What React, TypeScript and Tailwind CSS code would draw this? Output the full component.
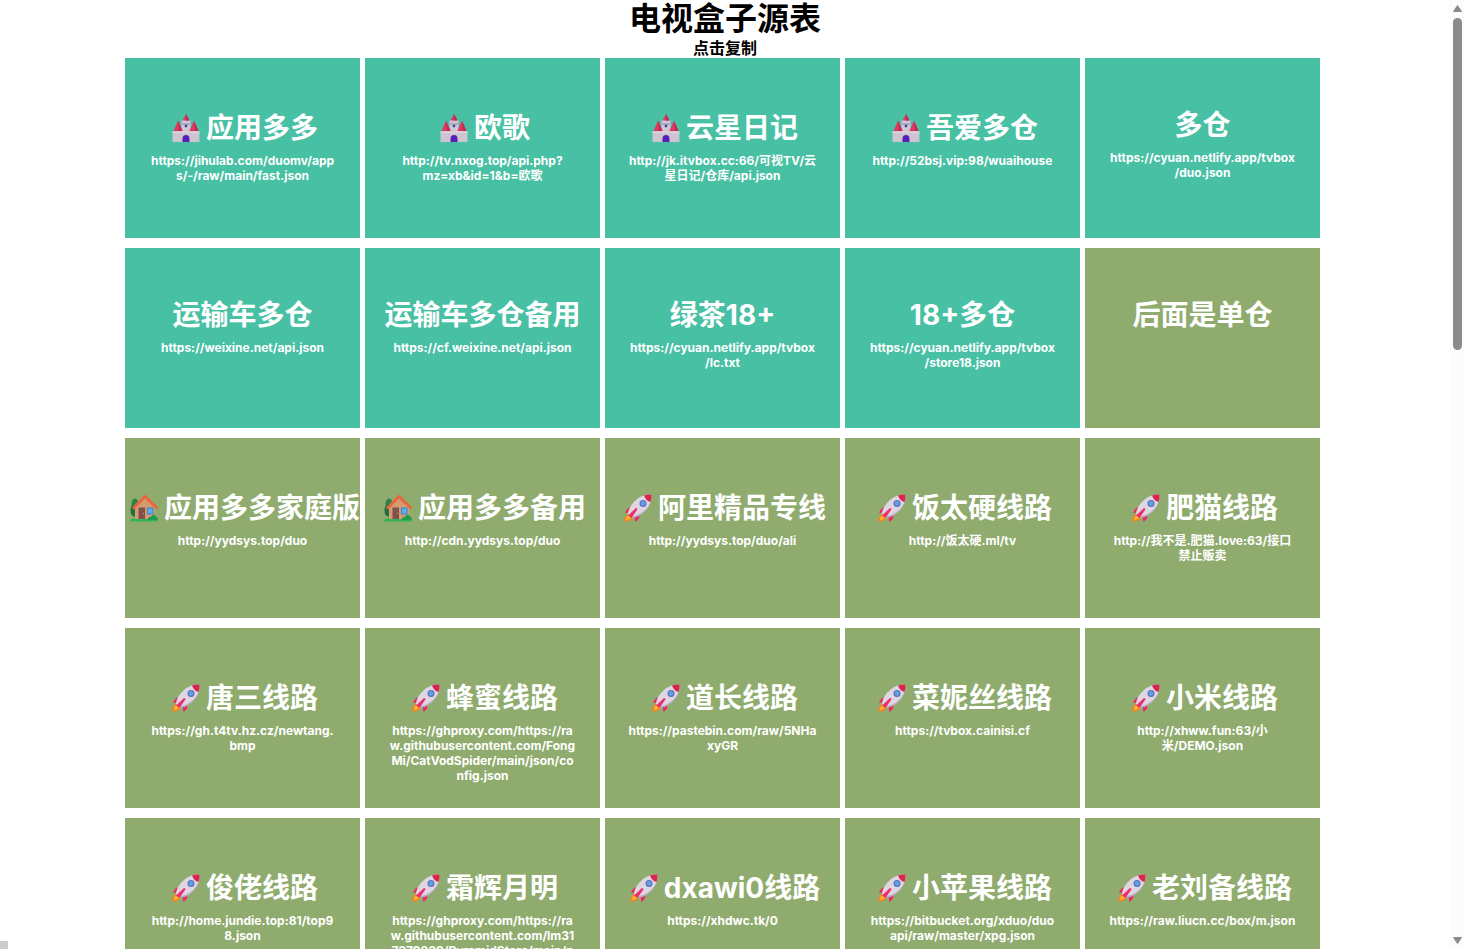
type IconName = "castle" | "house" | "rocket";

type Source = {
  name: string;
  url?: string;
  icon?: IconName;
  multi?: boolean;
};

const sources: Source[] = [
  { name: "应用多多", url: "https://jihulab.com/duomv/apps/-/raw/main/fast.json", icon: "castle", multi: true },
  { name: "欧歌", url: "http://tv.nxog.top/api.php?mz=xb&id=1&b=欧歌", icon: "castle", multi: true },
  { name: "云星日记", url: "http://jk.itvbox.cc:66/可视TV/云星日记/仓库/api.json", icon: "castle", multi: true },
  { name: "吾爱多仓", url: "http://52bsj.vip:98/wuaihouse", icon: "castle", multi: true },
  { name: "多仓", url: "https://cyuan.netlify.app/tvbox/duo.json", multi: true },
  { name: "运输车多仓", url: "https://weixine.net/api.json", multi: true },
  { name: "运输车多仓备用", url: "https://cf.weixine.net/api.json", multi: true },
  { name: "绿茶18+", url: "https://cyuan.netlify.app/tvbox/lc.txt", multi: true },
  { name: "18+多仓", url: "https://cyuan.netlify.app/tvbox/store18.json", multi: true },
  { name: "后面是单仓" },
  { name: "应用多多家庭版", url: "http://yydsys.top/duo", icon: "house" },
  { name: "应用多多备用", url: "http://cdn.yydsys.top/duo", icon: "house" },
  { name: "阿里精品专线", url: "http://yydsys.top/duo/ali", icon: "rocket" },
  { name: "饭太硬线路", url: "http://饭太硬.ml/tv", icon: "rocket" },
  { name: "肥猫线路", url: "http://我不是.肥猫.love:63/接口禁止贩卖", icon: "rocket" },
  { name: "唐三线路", url: "https://gh.t4tv.hz.cz/newtang.bmp", icon: "rocket" },
  { name: "蜂蜜线路", url: "https://ghproxy.com/https://raw.githubusercontent.com/FongMi/CatVodSpider/main/json/config.json", icon: "rocket" },
  { name: "道长线路", url: "https://pastebin.com/raw/5NHaxyGR", icon: "rocket" },
  { name: "菜妮丝线路", url: "https://tvbox.cainisi.cf", icon: "rocket" },
  { name: "小米线路", url: "http://xhww.fun:63/小米/DEMO.json", icon: "rocket" },
  { name: "俊佬线路", url: "http://home.jundie.top:81/top98.json", icon: "rocket" },
  { name: "霜辉月明", url: "https://ghproxy.com/https://raw.githubusercontent.com/lm317379829/PyramidStore/main/py.json", icon: "rocket" },
  { name: "dxawi0线路", url: "https://xhdwc.tk/0", icon: "rocket" },
  { name: "小苹果线路", url: "https://bitbucket.org/xduo/duoapi/raw/master/xpg.json", icon: "rocket" },
  { name: "老刘备线路", url: "https://raw.liucn.cc/box/m.json", icon: "rocket" },
];

function Castle() {
  return (
    <>
      <path d="M9.500 6h9v12h-9z" fill="#cfc6d4" />
      <path d="M9 9h10v2H9z" fill="#b7a8c0" />
      <path d="M2.500 15h7v4h-7zM18.500 15h7v4h-7z" fill="#bdb0c6" />
      <path d="M.5 17.500h27V28H.5z" fill="#cec5d2" />
      <path d="M.5 17.500h27v1.500H.5z" fill="#dcd4df" />
      <path d="M14 0l3.500 6.500h-7z" fill="#dd3560" />
      <path d="M6 6.500L10.500 17H1.500z" fill="#e0365f" />
      <path d="M22 6.500L26.500 17h-9z" fill="#e0365f" />
      <path d="M14 0l3.500 6.500H14zM6 6.500L10.500 17H7zM22 6.500L26.500 17H23z" fill="#bf2c58" />
      <circle cx="14" cy="12" r="1.400" fill="#4a3fb6" />
      <circle cx="9.500" cy="7" r=".8" fill="#4fb9dd" />
      <circle cx="22" cy="6.500" r=".8" fill="#4fb9dd" />
      <path d="M10.500 28v-3.500a3.500 3.500 0 017 0V28z" fill="#5a1fb8" />
    </>
  );
}

function House() {
  return (
    <>
      <ellipse cx="5" cy="10" rx="3.500" ry="5.500" fill="#2c8048" />
      <ellipse cx="4" cy="16.500" rx="3.500" ry="6" fill="#256f3f" />
      <path d="M0 26q3-3 14-3t14 3v1.500H0z" fill="#35b25c" />
      <path d="M5 12L15 3l10 10v12H5z" fill="#d59a70" />
      <path d="M3 14.500L15 2.500 27.500 14.500" fill="none" stroke="#e8663c" strokeWidth="3" strokeLinejoin="round" />
      <path d="M8.500 13.500h6.500V25H8.500z" fill="#80504a" />
      <circle cx="13.500" cy="19.500" r=".6" fill="#e8b45d" />
      <path d="M17 13.500h6.500v7H17z" fill="#3d86c4" />
      <path d="M18 14.500h4.500v5H18z" fill="#57aef0" />
      <path d="M17.500 26q1-4 4-3.500 2-3.500 4-.5 2.500 1 2.500 4z" fill="#1f9a50" />
    </>
  );
}

function Rocket() {
  return (
    <>
      <path d="M5 20q-5 1-4.500 7.500Q7 28 9 23z" fill="#f58220" />
      <path d="M5 21q-3 1-3 5 4 0 5-3z" fill="#ffb52e" />
      <path d="M8 13q-5 0-7 6l6-1z" fill="#e92a63" />
      <path d="M15 19q2 5-3.500 9-1.500-3 0-6z" fill="#e92a63" />
      <path d="M27.500.500Q16 0 9 9q-4.500 5-5 11l3.500 3.500Q15 23 20 18q8-7 7.500-17.500z" fill="#dfd6e4" />
      <path d="M27 6q-1.500 7-9 12.500Q13 22 7.500 22.500l.5 1Q15 23 20 18q6.500-5.500 7-12z" fill="#b9a8c6" />
      <path d="M20 1.500Q24 0 27.500.500 28 4 26.500 8 22 7 20 1.500z" fill="#db2550" />
      <path d="M4 21.500l8-7.500q2 0 1 2l-5.500 8z" fill="#ee2e6b" />
      <circle cx="19" cy="9.500" r="3.500" fill="#5a6fb4" />
      <circle cx="19" cy="9.500" r="2.400" fill="#5fa0e6" />
    </>
  );
}

const icons = { castle: Castle, house: House, rocket: Rocket };

function SourceCard({ name, url, icon, multi }: Source) {
  const Icon = icon ? icons[icon] : null;
  return (
    <button
      type="button"
      onClick={() => url && navigator.clipboard?.writeText(url)}
      className={`flex h-[180px] flex-col items-center overflow-hidden text-white ${
        Icon ? "pt-[52px]" : "pt-[49px]"
      } ${multi ? "bg-[#48c0a4]" : "bg-[#8fac6e]"}`}
    >
      <span className="flex h-9 items-center whitespace-nowrap text-[28px] leading-9 font-bold">
        {Icon && (
          <svg viewBox="0 0 28 28" className="mr-[6px] ml-[5px] size-7 shrink-0" aria-hidden="true">
            <Icon />
          </svg>
        )}
        {name}
      </span>
      <span className="mt-[7px] w-4/5 text-xs leading-[15px] font-bold wrap-break-word">{url}</span>
    </button>
  );
}

function Scrollbar() {
  return (
    <div className="flex w-[15px] shrink-0 flex-col items-center bg-[#fcfcfc] py-[5px]" aria-hidden="true">
      <svg viewBox="0 0 9 7" className="h-[7px] w-[9px]">
        <path d="M4.500 0.500L8.500 6.500H.5z" fill="#8b8b8b" stroke="#8b8b8b" strokeLinejoin="round" />
      </svg>
      <div className="mt-[6px] h-[35vh] w-[9px] rounded-full bg-[#8b8b8b]" />
      <svg viewBox="0 0 9 7" className="mt-auto h-[7px] w-[9px]">
        <path d="M.5.500h8L4.500 6.500z" fill="#8b8b8b" stroke="#8b8b8b" strokeLinejoin="round" />
      </svg>
    </div>
  );
}

export default function App() {
  return (
    <div className="flex h-screen overflow-hidden bg-white font-['Inter','Noto_Sans_CJK_SC',sans-serif] text-black">
      <main className="min-w-0 flex-1">
        <header className="text-center font-bold">
          <h1 className="text-[32px] leading-[38px]">电视盒子源表</h1>
          <h3 className="text-base leading-5">点击复制</h3>
        </header>
        <div className="mx-auto grid max-w-[1200px] grid-cols-5 gap-x-[5px] gap-y-[10px] pr-[5px]">
          {sources.map((source) => (
            <SourceCard key={source.name} {...source} />
          ))}
        </div>
      </main>
      <Scrollbar />
      <div className="fixed bottom-0 left-0 size-2 bg-[#cccccc]" />
    </div>
  );
}
